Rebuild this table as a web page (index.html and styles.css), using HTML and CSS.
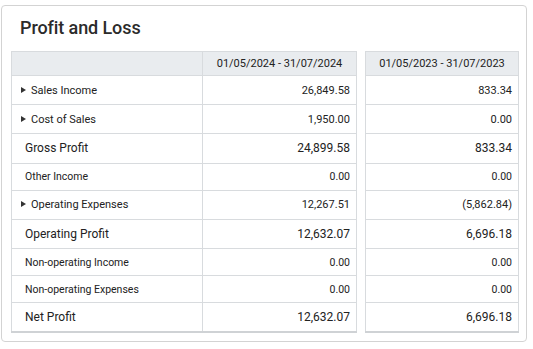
FILE: index.html
```html
<!DOCTYPE html>
<html>
<head>
<meta charset="utf-8">
<link rel="stylesheet" href="styles.css">
</head>
<body>
<div class="page">
  <div class="card">
    <h1 class="title">Profit and Loss</h1>
    <table class="pl">
      <colgroup>
        <col class="c-label"><col class="c-val"><col class="c-gap"><col class="c-val2">
      </colgroup>
      <thead>
        <tr class="head">
          <th></th>
          <th>01/05/2024 - 31/07/2024</th>
          <td class="gap"></td>
          <th>01/05/2023 - 31/07/2023</th>
        </tr>
      </thead>
      <tbody>
        <tr class="r-exp">
          <td class="label"><span class="arrow"></span>Sales Income</td>
          <td class="num">26,849.58</td><td class="gap"></td><td class="num">833.34</td>
        </tr>
        <tr class="r-exp">
          <td class="label"><span class="arrow"></span>Cost of Sales</td>
          <td class="num">1,950.00</td><td class="gap"></td><td class="num">0.00</td>
        </tr>
        <tr class="r-total">
          <td class="label plain">Gross Profit</td>
          <td class="num">24,899.58</td><td class="gap"></td><td class="num">833.34</td>
        </tr>
        <tr class="r-small">
          <td class="label plain">Other Income</td>
          <td class="num">0.00</td><td class="gap"></td><td class="num">0.00</td>
        </tr>
        <tr class="r-exp">
          <td class="label"><span class="arrow"></span>Operating Expenses</td>
          <td class="num">12,267.51</td><td class="gap"></td><td class="num">(5,862.84)</td>
        </tr>
        <tr class="r-total">
          <td class="label plain">Operating Profit</td>
          <td class="num">12,632.07</td><td class="gap"></td><td class="num">6,696.18</td>
        </tr>
        <tr class="r-small">
          <td class="label plain">Non-operating Income</td>
          <td class="num">0.00</td><td class="gap"></td><td class="num">0.00</td>
        </tr>
        <tr class="r-small">
          <td class="label plain">Non-operating Expenses</td>
          <td class="num">0.00</td><td class="gap"></td><td class="num">0.00</td>
        </tr>
        <tr class="r-total last">
          <td class="label plain">Net Profit</td>
          <td class="num">12,632.07</td><td class="gap"></td><td class="num">6,696.18</td>
        </tr>
      </tbody>
    </table>
  </div>
</div>
</body>
</html>
```
FILE: styles.css
```css
* { box-sizing: border-box; }
html, body { margin: 0; padding: 0; background: #fff; }
body { font-family: Roboto, "Liberation Sans", sans-serif; color: #222; }

.page { padding: 5px 0 0 1px; }

.card {
  width: 526px;
  height: 337px;
  border: 1px solid #d3d3d3;
  border-radius: 4px;
  padding: 0 9px;
}

.title {
  margin: 10px 0 11px 9px;
  font-size: 18px;
  line-height: 24px;
  font-weight: 500;
  color: #2b2b2b;
  letter-spacing: -0.1px;
}

.pl {
  width: 507px;
  border-collapse: collapse;
  table-layout: fixed;
}
.c-label { width: 191px; }
.c-val { width: 154px; }
.c-gap { width: 9px; }
.c-val2 { width: 153px; }

.pl th, .pl td:not(.gap) {
  border: 1px solid #d8dbde;
}
.pl td.gap { border: none; padding: 0; background: #fff; }

.head th {
  height: 24px;
  background: #e9ecef;
  font-size: 11px;
  font-weight: 400;
  color: #222;
  text-align: center;
  padding: 0;
}

.pl td { padding: 0; }
.num { text-align: right; padding-right: 6px !important; }

.label { padding-left: 9px !important; }
.label.plain { padding-left: 13px !important; }

.arrow {
  display: inline-block;
  width: 0; height: 0;
  border-left: 5px solid #333;
  border-top: 3.5px solid transparent;
  border-bottom: 3.5px solid transparent;
  margin-right: 5px;
  vertical-align: 1px;
}

.r-exp td { height: 29px; font-size: 11px; }
.r-small td { height: 27px; font-size: 10.5px; }
.r-total td { height: 29.5px; font-size: 12px; font-weight: 400; }

.last td:not(.gap) { border-bottom: 2px solid #cfd2d5; }
```
